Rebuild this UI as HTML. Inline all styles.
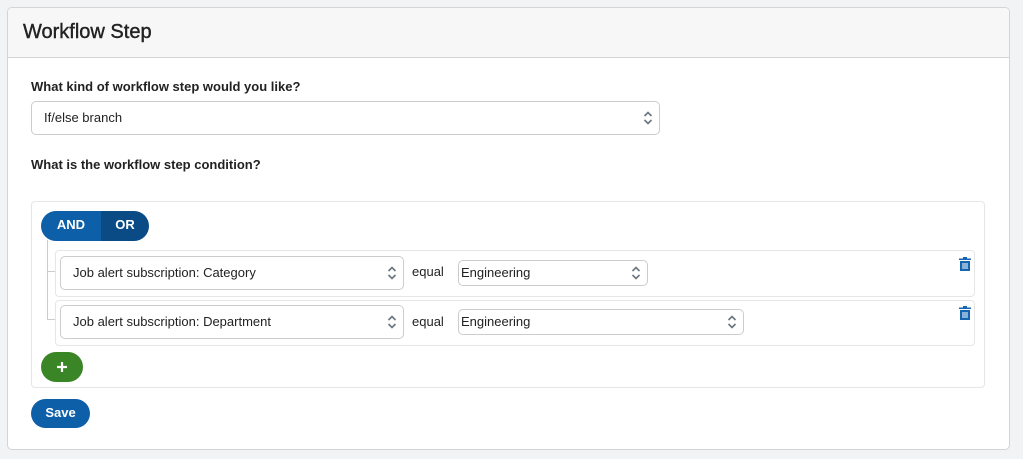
<!DOCTYPE html>
<html><head><style>
body{margin:0;background:#f1f3f5;font-family:"Liberation Sans",sans-serif;color:#222;width:1023px;height:459px;overflow:hidden;position:relative}
.card{position:absolute;left:7px;top:7px;width:1001px;height:441px;border:1px solid #d4d4d4;border-radius:5px;background:#fff;overflow:hidden}
.hd{height:49px;background:#f7f7f7;border-bottom:1px solid #d4d4d4;font-size:20px;line-height:49px;padding-left:15px;color:#222;-webkit-text-stroke:0.4px #222}
.a{position:absolute}
.lbl{font-size:13px;font-weight:bold;color:#222}
.sel{position:absolute;border:1px solid #ccc;border-radius:5px;background:#fff;font-size:13px;box-sizing:border-box;padding-left:12px;color:#222}
.sel svg{position:absolute;right:6px;top:50%;margin-top:-7px}
.btn{position:absolute;color:#fff;font-weight:bold;font-size:13px;text-align:center}
</style></head><body>
<div class="card">
<div class="hd">Workflow Step</div>
</div>
<div class="a lbl" style="left:31px;top:79px">What kind of workflow step would you like?</div>
<div class="sel" style="left:31px;top:101px;width:629px;height:34px;line-height:32px">If/else branch<svg width="10" height="14" viewBox="0 0 10 14"><path d="M1.5 5L5 1.5 8.5 5M1.5 9L5 12.5 8.5 9" fill="none" stroke="#6a7480" stroke-width="1.6"/></svg></div>
<div class="a lbl" style="left:31px;top:157px">What is the workflow step condition?</div>
<div class="a" style="left:31px;top:201px;width:952px;height:185px;border:1px solid #e6e6e6;border-radius:4px"></div>
<div class="a" style="left:47px;top:240px;width:8px;height:79px;border-left:1px solid #ccc;border-bottom:1px solid #ccc"></div>
<div class="a" style="left:47px;top:271px;width:8px;border-top:1px solid #ccc"></div>
<div class="btn" style="left:41px;top:211px;width:60px;height:30px;line-height:27px;background:#0d5fa8;border-radius:15px 0 0 15px">AND</div>
<div class="btn" style="left:101px;top:211px;width:48px;height:30px;line-height:27px;background:#0a4a85;border-radius:0 15px 15px 0">OR</div>
<div class="a" style="left:55px;top:250px;width:918px;height:45px;border:1px solid #e6e6e6;border-radius:4px"></div>
<div class="a" style="left:55px;top:300px;width:918px;height:44px;border:1px solid #e6e6e6;border-radius:4px"></div>
<div class="sel" style="left:60px;top:256px;width:344px;height:34px;line-height:32px">Job alert subscription: Category<svg width="10" height="14" viewBox="0 0 10 14"><path d="M1.5 5L5 1.5 8.5 5M1.5 9L5 12.5 8.5 9" fill="none" stroke="#6a7480" stroke-width="1.6"/></svg></div>
<div class="a" style="left:412px;top:264px;font-size:13px">equal</div>
<div class="sel" style="left:458px;top:260px;width:190px;height:26px;line-height:24px;padding-left:2px">Engineering<svg width="10" height="14" viewBox="0 0 10 14"><path d="M1.5 5L5 1.5 8.5 5M1.5 9L5 12.5 8.5 9" fill="none" stroke="#6a7480" stroke-width="1.6"/></svg></div>
<div class="sel" style="left:60px;top:305px;width:344px;height:34px;line-height:32px">Job alert subscription: Department<svg width="10" height="14" viewBox="0 0 10 14"><path d="M1.5 5L5 1.5 8.5 5M1.5 9L5 12.5 8.5 9" fill="none" stroke="#6a7480" stroke-width="1.6"/></svg></div>
<div class="a" style="left:412px;top:314px;font-size:13px">equal</div>
<div class="sel" style="left:458px;top:309px;width:286px;height:26px;line-height:24px;padding-left:2px">Engineering<svg width="10" height="14" viewBox="0 0 10 14"><path d="M1.5 5L5 1.5 8.5 5M1.5 9L5 12.5 8.5 9" fill="none" stroke="#6a7480" stroke-width="1.6"/></svg></div>
<svg class="a" style="left:959px;top:257px" width="12" height="14" viewBox="0 0 12 14"><path d="M4 0h4v1.5h4v1.5H0V1.5h4z M1 4h10v10H1z" fill="#1565b0"/><path d="M4 6v6M6 6v6M8 6v6" stroke="#fff" stroke-width="1"/></svg>
<svg class="a" style="left:959px;top:306px" width="12" height="14" viewBox="0 0 12 14"><path d="M4 0h4v1.5h4v1.5H0V1.5h4z M1 4h10v10H1z" fill="#1565b0"/><path d="M4 6v6M6 6v6M8 6v6" stroke="#fff" stroke-width="1"/></svg>
<div class="btn" style="left:41px;top:352px;width:42px;height:30px;background:#3a8526;border-radius:15px"><svg style="position:absolute;left:15px;top:9px" width="12" height="12" viewBox="0 0 12 12"><path d="M6 1v10M1 6h10" stroke="#fff" stroke-width="2.2"/></svg></div>
<div class="btn" style="left:31px;top:399px;width:59px;height:29px;line-height:28px;background:#0d5fa8;border-radius:15px">Save</div>
</body></html>
